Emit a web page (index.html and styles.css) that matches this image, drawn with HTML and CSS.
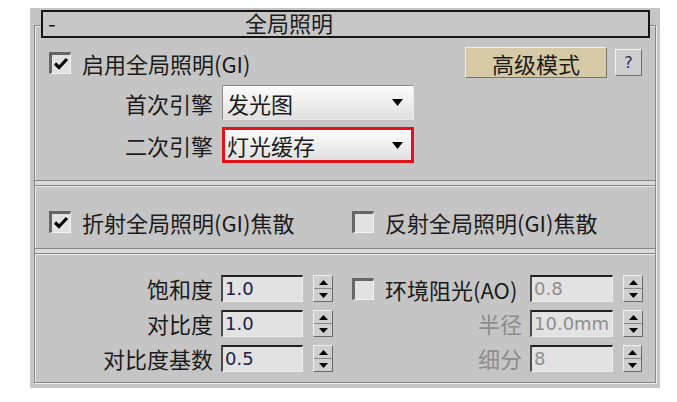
FILE: index.html
```html
<!DOCTYPE html>
<html lang="zh-CN">
<head>
    <meta charset="UTF-8">
    <meta name="viewport" content="width=device-width, initial-scale=1.0">
    <title>全局照明</title>
    <link rel="stylesheet" href="styles.css">
</head>
<body>

    <div class="panel">
        <div class="rollout">
            <div class="rollout-title">
                <span class="collapse">-</span>
                <span class="title-text">全局照明</span>
            </div>

            <div class="section section-top">
                <div class="row-main">
                    <label class="check">
                        <span class="box"><svg width="18" height="18" viewBox="0 0 18 18"><path d="M3 8.5 L7 12.5 L15 4" /></svg></span>
                        启用全局照明(GI)
                    </label>
                    <button class="btn btn-mode">高级模式</button>
                    <button class="btn btn-help">?</button>
                </div>
                <div class="engine-row">
                    <span class="engine-label">首次引擎</span>
                    <div class="dropdown">
                        <span>发光图</span>
                        <svg width="11" height="7" viewBox="0 0 11 7"><path d="M0 0H11L5.5 7Z" /></svg>
                    </div>
                </div>
                <div class="engine-row">
                    <span class="engine-label">二次引擎</span>
                    <div class="dropdown marked">
                        <span>灯光缓存</span>
                        <svg width="11" height="7" viewBox="0 0 11 7"><path d="M0 0H11L5.5 7Z" /></svg>
                    </div>
                </div>
            </div>

            <div class="divider"></div>

            <div class="section section-caustics">
                <label class="check">
                    <span class="box"><svg width="18" height="18" viewBox="0 0 18 18"><path d="M3 8.5 L7 12.5 L15 4" /></svg></span>
                    折射全局照明(GI)焦散
                </label>
                <label class="check">
                    <span class="box"></span>
                    反射全局照明(GI)焦散
                </label>
            </div>

            <div class="divider"></div>

            <div class="section section-params">
                <span class="param-label">饱和度</span>
                <span class="num">1.0</span>
                <span class="spin"><span class="spin-half"><svg width="9" height="5" viewBox="0 0 9 5"><path d="M4.5 0L9 5H0Z" /></svg></span><span class="spin-half"><svg width="9" height="5" viewBox="0 0 9 5"><path d="M0 0H9L4.5 5Z" /></svg></span></span>
                <label class="check check-ao">
                    <span class="box"></span>
                    环境阻光(AO)
                </label>
                <span class="num disabled">0.8</span>
                <span class="spin"><span class="spin-half"><svg width="9" height="5" viewBox="0 0 9 5"><path d="M4.5 0L9 5H0Z" /></svg></span><span class="spin-half"><svg width="9" height="5" viewBox="0 0 9 5"><path d="M0 0H9L4.5 5Z" /></svg></span></span>

                <span class="param-label">对比度</span>
                <span class="num">1.0</span>
                <span class="spin"><span class="spin-half"><svg width="9" height="5" viewBox="0 0 9 5"><path d="M4.5 0L9 5H0Z" /></svg></span><span class="spin-half"><svg width="9" height="5" viewBox="0 0 9 5"><path d="M0 0H9L4.5 5Z" /></svg></span></span>
                <span class="param-label disabled">半径</span>
                <span class="num disabled">10.0mm</span>
                <span class="spin"><span class="spin-half"><svg width="9" height="5" viewBox="0 0 9 5"><path d="M4.5 0L9 5H0Z" /></svg></span><span class="spin-half"><svg width="9" height="5" viewBox="0 0 9 5"><path d="M0 0H9L4.5 5Z" /></svg></span></span>

                <span class="param-label">对比度基数</span>
                <span class="num">0.5</span>
                <span class="spin"><span class="spin-half"><svg width="9" height="5" viewBox="0 0 9 5"><path d="M4.5 0L9 5H0Z" /></svg></span><span class="spin-half"><svg width="9" height="5" viewBox="0 0 9 5"><path d="M0 0H9L4.5 5Z" /></svg></span></span>
                <span class="param-label disabled">细分</span>
                <span class="num disabled">8</span>
                <span class="spin"><span class="spin-half"><svg width="9" height="5" viewBox="0 0 9 5"><path d="M4.5 0L9 5H0Z" /></svg></span><span class="spin-half"><svg width="9" height="5" viewBox="0 0 9 5"><path d="M0 0H9L4.5 5Z" /></svg></span></span>
            </div>
        </div>
    </div>

</body>
</html>
```

FILE: styles.css
```css
body {
    margin: 0;
    background-color: #ffffff;
    font-family: "Noto Sans CJK SC", sans-serif;
    font-size: 22px;
    color: #1b1b1b;
}
.panel {
    width: 630px;
    margin: 8px 0 0 30px;
    padding: 17px 4px 5px 4px;
    box-sizing: border-box;
    background-color: #c5c5c5;
}
.rollout {
    border: 1px solid #888888;
    box-shadow: inset 1px 1px #ececec, 1px 1px #ececec;
}
.rollout-title {
    display: flex;
    align-items: center;
    height: 28px;
    margin: -16px 5px 0 6px;
    padding-bottom: 4px;
    box-sizing: border-box;
    border: 2px solid #141414;
    background-color: #c6c6c6;
    line-height: 20px;
}
.collapse {
    width: 202px;
    padding-left: 5px;
    box-sizing: border-box;
}
.section-top {
    padding: 9px 13px 17px 14px;
}
.row-main {
    display: flex;
    align-items: center;
    height: 31px;
}
.check {
    display: flex;
    align-items: center;
    gap: 11px;
    white-space: nowrap;
}
.box {
    display: flex;
    align-items: center;
    justify-content: center;
    width: 22px;
    height: 22px;
    box-sizing: border-box;
    border-top: 3px solid #666666;
    border-left: 3px solid #666666;
    border-right: 1px solid #f2f2f2;
    border-bottom: 1px solid #f2f2f2;
    background-color: #e2e2e2;
}
.box path {
    fill: none;
    stroke: #000000;
    stroke-width: 3.2;
}
.btn {
    font-family: inherit;
    font-size: 22px;
    color: #1b1b1b;
    padding: 0;
    border: 1px solid;
    box-sizing: border-box;
    line-height: 1;
}
.btn-mode {
    margin-left: auto;
    width: 142px;
    height: 31px;
    background-color: #d6c9a6;
    border-color: #f4eedc #7c7567 #7c7567 #f4eedc;
}
.btn-help {
    margin-left: 8px;
    width: 27px;
    height: 27px;
    font-family: "DejaVu Sans", sans-serif;
    font-size: 16px;
    color: #2a2a55;
    background-color: #cecece;
    border-color: #f2f2f2 #6f6f6f #6f6f6f #f2f2f2;
}
.engine-row {
    display: flex;
    align-items: center;
    margin-top: 7px;
}
.engine-label {
    width: 173px;
    padding-right: 9px;
    box-sizing: border-box;
    text-align: right;
}
.dropdown {
    display: flex;
    align-items: center;
    justify-content: space-between;
    width: 192px;
    height: 35px;
    padding: 0 10px 0 4px;
    box-sizing: border-box;
    border: 1px solid;
    border-color: #8a8a8a #e8e8e8 #e8e8e8 #8a8a8a;
    background: linear-gradient(#fcfcfc, #e0e0e0);
}
.dropdown.marked {
    height: 36px;
    padding: 0 8px 0 2px;
    border: 3px solid #e0131b;
}
.divider {
    height: 6px;
    box-sizing: border-box;
    border-top: 1px solid #858585;
    border-bottom: 1px solid #858585;
    background-color: #dadada;
    box-shadow: 0 1px #ececec;
}
.section-caustics {
    display: grid;
    grid-template-columns: 303px 1fr;
    align-items: center;
    height: 26px;
    padding: 20px 0 16px 14px;
}
.section-params {
    display: grid;
    grid-template-columns: 186px 92px 39px 178px 93px 19px;
    grid-auto-rows: 27px;
    row-gap: 8px;
    padding: 21px 0 10px 0;
}
.param-label {
    padding-right: 8px;
    text-align: right;
    line-height: 27px;
    white-space: nowrap;
}
.param-label.disabled {
    color: #8c8c8c;
}
.check-ao {
    justify-self: start;
}
.num {
    width: 82px;
    padding-left: 2px;
    box-sizing: border-box;
    border-top: 2px solid #222222;
    border-left: 2px solid #4a4a4a;
    border-right: 1px solid #ececec;
    border-bottom: 1px solid #ececec;
    background-color: #e2e2e2;
    font-family: "DejaVu Sans", sans-serif;
    font-size: 18px;
    line-height: 24px;
    color: #20204a;
}
.num.disabled {
    width: 83px;
    color: #8e8e8e;
}
.spin {
    display: flex;
    flex-direction: column;
    width: 20px;
    box-sizing: border-box;
    border: 1px solid;
    border-color: #f0f0f0 #6c6c6c #6c6c6c #f0f0f0;
    background-color: #cfcfcf;
}
.spin:last-child {
    width: 19px;
}
.spin-half {
    flex: 1;
    display: flex;
    align-items: center;
    justify-content: center;
}
.spin-half + .spin-half {
    border-top: 1px solid #8a8a8a;
}
.spin path,
.dropdown path {
    fill: #000000;
}
```
